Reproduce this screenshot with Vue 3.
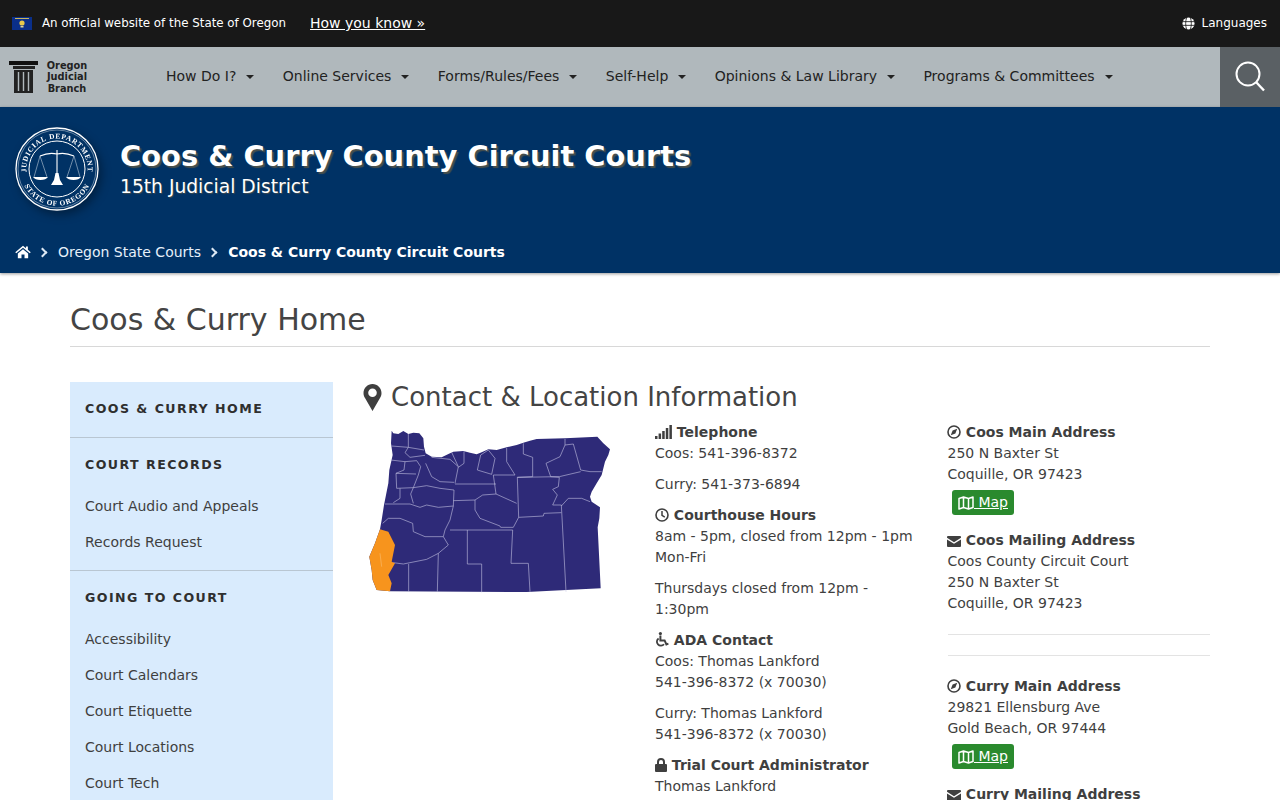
<script setup>
const navItems = ["How Do I?", "Online Services", "Forms/Rules/Fees", "Self-Help", "Opinions & Law Library", "Programs & Committees"]

const sideSections = [
  { title: "Court Records", links: ["Court Audio and Appeals", "Records Request"] },
  { title: "Going to Court", links: ["Accessibility", "Court Calendars", "Court Etiquette", "Court Locations", "Court Tech", "Interpreters"] }
]

const counties = [
  { name: "Coos", lines: ["250 N Baxter St", "Coquille, OR 97423"], mail: ["Coos County Circuit Court", "250 N Baxter St", "Coquille, OR 97423"] },
  { name: "Curry", lines: ["29821 Ellensburg Ave", "Gold Beach, OR 97444"], mail: ["Curry County Circuit Court", "29821 Ellensburg Ave", "Gold Beach, OR 97444"] }
]

// county lines, traced in the same coords as the state outline
const countyLines = [
  "M95 78 L145 82 L192 90", "M145 42 L145 82", "M145 82 L135 98 L150 112 L195 106", "M135 125 L170 122 L182 140 L175 165 L160 203",
  "M92 120 L135 125 L132 150 L108 160 L168 162", "M108 160 L110 205 L160 203", "M160 203 L152 222 L160 250", "M197 130 L215 170 L240 185 L282 187", "M215 112 L270 118 L295 140 L285 190",
  "M275 97 L295 140", "M312 94 L312 130 L295 142", "M385 90 L362 105 L352 150 L395 163 L405 115 L385 90", "M440 84 L440 125 L465 165 L400 165 L408 222 L470 250",
  "M490 70 L490 102 L518 112 L518 170 L472 172 L476 292 L550 288 L552 280 L604 278", "M615 57 L615 75 L640 72 L662 150 L690 155 L725 155", "M615 75 L600 110 L558 130 L572 170 L598 172 L595 200 L578 208 L592 225 L578 255 L604 255",
  "M472 172 L598 170 L662 155", "M285 192 L408 192", "M280 242 L345 240 L345 270 L360 295 L420 318 L422 322 L460 322 L476 292", "M345 240 L368 225 L408 222",
  "M160 203 L200 197 L240 205 L282 210 L280 258 L270 300 L255 330 L250 350 L195 350 L160 335 L158 310 L120 295 L85 295 L68 310", "M75 252 L150 252 L180 262 L200 255 L235 262 L280 258",
  "M120 205 L120 235 L100 248", "M270 330 L458 330 L453 430 L505 430 L510 515", "M322 330 L322 432 L365 432 L365 517", "M250 350 L265 375 L235 400 L232 515",
  "M235 400 L200 418 L130 432 L100 428", "M146 432 L146 515", "M604 255 L618 515", "M604 258 L625 235 L665 235 L690 245"
]
</script>

<template>
  <div class="page">
    <div class="topbar">
      <div class="official">
        <svg class="flag" viewBox="0 0 20 13" width="20" height="13">
          <rect width="20" height="13" fill="#0a2f8a" />
          <rect x="3" y="1" width="14" height="1" fill="#c9b458" />
          <circle cx="10" cy="6" r="2.6" fill="#e8c94a" />
          <rect x="8.5" y="9" width="3" height="1.5" fill="#d9d2a0" />
        </svg>
        <span>An official website of the State of Oregon</span>
        <a class="know">How you know »</a>
      </div>
      <div class="languages">
        <svg viewBox="0 0 14 14" width="13" height="13">
          <circle cx="7" cy="7" r="6.5" fill="#fff" />
          <path d="M0.5 5H13.5M0.5 9H13.5M5 0.5C3.6 4.5 3.6 9.5 5 13.5M9 0.5C10.4 4.5 10.4 9.5 9 13.5" stroke="#181818" stroke-width="0.9" fill="none" />
        </svg>
        <span>Languages</span>
      </div>
    </div>

    <nav class="mainnav">
      <div class="logo">
        <svg viewBox="0 0 30 32" width="30" height="32">
          <rect x="0" y="0" width="29" height="4" fill="#111" />
          <rect x="4" y="5" width="22" height="3" fill="#222" />
          <rect x="5" y="9" width="19" height="23" fill="#222" />
          <path d="M9.5 11V30M14.5 11V30M19.5 11V30" stroke="#b0b8bc" stroke-width="1.4" />
        </svg>
        <div class="logo-text">Oregon<br>Judicial<br>Branch</div>
      </div>
      <ul class="navlist">
        <li v-for="item in navItems" :key="item">{{ item }}<i class="caret"></i></li>
      </ul>
      <div class="searchbtn">
        <svg viewBox="0 0 32 32" width="32" height="32">
          <circle cx="14" cy="13" r="11.5" fill="none" stroke="#fff" stroke-width="2" />
          <path d="M22 21L30 29.5" stroke="#fff" stroke-width="2.4" />
        </svg>
      </div>
    </nav>

    <header class="banner">
      <div class="banner-top">
        <svg class="seal" viewBox="0 0 84 84" width="84" height="84">
          <defs>
            <path id="sealTop" d="M12.3 50A30.7 30.7 0 1 1 71.7 50" />
            <path id="sealBottom" d="M6.2 50A36.7 36.7 0 0 0 77.8 50" />
          </defs>
          <circle cx="42" cy="42" r="41" fill="#003265" stroke="#fff" stroke-width="1.3" />
          <circle cx="42" cy="42" r="39" fill="none" stroke="#fff" stroke-width="0.4" />
          <circle cx="42" cy="42" r="28" fill="none" stroke="#fff" stroke-width="1" />
          <text class="seal-text"><textPath href="#sealTop" startOffset="50%" text-anchor="middle">JUDICIAL DEPARTMENT</textPath></text>
          <text class="seal-text"><textPath href="#sealBottom" startOffset="50%" text-anchor="middle">STATE OF OREGON</textPath></text>
          <path d="M42 23V52M25 29Q34 25 42 27Q50 25 59 29" stroke="#fff" stroke-width="1.1" fill="none" />
          <path d="M25 29L19 50M25 29L32 50M59 29L52 50M59 29L65 50" stroke="#dfe6ee" stroke-width="0.5" fill="none" />
          <path d="M18 50H33Q31 53 25.5 53Q20 53 18 50ZM51 50H66Q64 53 58.5 53Q53 53 51 50Z" fill="#fff" />
          <path d="M40.5 46H43.5L45 53H39ZM36 58L39 53H45L48 58Z" fill="#fff" />
        </svg>
        <div class="banner-titles">
          <h1>Coos &amp; Curry County Circuit Courts</h1>
          <div class="district">15th Judicial District</div>
        </div>
      </div>
      <div class="crumbs">
        <svg viewBox="0 0 18 15" width="16" height="14">
          <path d="M9 0.5L0.3 7.8L1.4 9L9 2.7L16.6 9L17.7 7.8L14.5 5.1V1.2H12.3V3.3ZM3.2 9.2V14.5H7.3V10.3H10.7V14.5H14.8V9.2L9 4.4Z" fill="#fff" />
        </svg>
        <i class="chev"></i>
        <span>Oregon State Courts</span>
        <i class="chev"></i>
        <strong>Coos &amp; Curry County Circuit Courts</strong>
      </div>
    </header>

    <main class="content">
      <h1 class="page-title">Coos &amp; Curry Home</h1>
      <div class="layout">
        <aside class="sidebar">
          <div class="side-home">Coos &amp; Curry Home</div>
          <section v-for="sec in sideSections" :key="sec.title" class="side-section">
            <h4>{{ sec.title }}</h4>
            <a v-for="link in sec.links" :key="link">{{ link }}</a>
          </section>
        </aside>

        <div class="main-col">
          <h2 class="contact-title">
            <svg viewBox="0 0 18 27" width="19" height="27">
              <path fill-rule="evenodd" d="M9 0C4 0 0 4 0 9C0 11 .6 12.6 1.5 14L9 27L16.5 14C17.4 12.6 18 11 18 9C18 4 14 0 9 0ZM9 13A4.3 4.3 0 1 1 9 4.4A4.3 4.3 0 0 1 9 13Z" fill="#3f3f3f" />
            </svg>
            Contact &amp; Location Information
          </h2>
          <div class="info-grid">
            <div class="map-col">
              <svg viewBox="0 0 780 540" width="260" height="180">
                <path fill="#2e2a78" d="M95 32L100 40L115 42L130 33L145 42L160 38L178 40L190 55L192 80L197 100L215 110L245 112L270 100L280 95L310 93L330 98L350 103L365 97L385 88L410 90L440 82L470 75L490 68L510 62L530 57L615 55L712 50L730 70L750 88L745 105L735 125L725 165L710 190L695 215L690 230L695 245L720 262L718 295L713 322L722 505L500 516L90 514L50 510L38 480L35 450L28 410L45 370L60 328L65 300L72 255L78 225L85 190L88 150L98 105L93 70Z" />
                <path v-for="(d, i) in countyLines" :key="i" :d="d" fill="none" stroke="#c4c2e2" stroke-width="1.8" />
                <path fill="#f7941d" d="M60 328L85 335L105 375L95 425L105 430L85 465L95 490L90 514L50 510L38 480L35 450L28 410L45 370Z" />
                <path d="M60 400L65 440" stroke="#fbc57f" stroke-width="1.5" fill="none" />
              </svg>
            </div>

            <div class="info-col">
              <h5>
                <svg viewBox="0 0 17 14" width="17" height="14" class="ico">
                  <path d="M0 11H2.5V14H0ZM3.6 8.5H6.1V14H3.6ZM7.2 6H9.7V14H7.2ZM10.8 3H13.3V14H10.8ZM14.4 0H16.9V14H14.4Z" fill="#3f3f3f" />
                </svg>
                Telephone
              </h5>
              <p>Coos: 541-396-8372</p>
              <p>Curry: 541-373-6894</p>
              <h5>
                <svg viewBox="0 0 14 14" width="14" height="14" class="ico">
                  <circle cx="7" cy="7" r="6" fill="none" stroke="#3f3f3f" stroke-width="1.6" />
                  <path d="M7 3V7.4L9.8 9.2" fill="none" stroke="#3f3f3f" stroke-width="1.5" />
                </svg>
                Courthouse Hours
              </h5>
              <p>8am - 5pm, closed from 12pm - 1pm Mon-Fri</p>
              <p>Thursdays closed from 12pm - 1:30pm</p>
              <h5>
                <svg viewBox="0 0 14 15" width="14" height="15" class="ico">
                  <circle cx="5.4" cy="1.6" r="1.6" fill="#3f3f3f" />
                  <path d="M5.4 3.5V8.4H9.6L11.4 12.4L13.4 11.6" fill="none" stroke="#3f3f3f" stroke-width="2" />
                  <path d="M3.6 6.4A4 4 0 1 0 9 12.2" fill="none" stroke="#3f3f3f" stroke-width="1.8" />
                </svg>
                ADA Contact
              </h5>
              <p>Coos: Thomas Lankford<br>541-396-8372 (x 70030)</p>
              <p>Curry: Thomas Lankford<br>541-396-8372 (x 70030)</p>
              <h5>
                <svg viewBox="0 0 12 14" width="12" height="14" class="ico">
                  <path fill-rule="evenodd" d="M2 6V4A4 4 0 0 1 10 4V6H11A1 1 0 0 1 12 7V13A1 1 0 0 1 11 14H1A1 1 0 0 1 0 13V7A1 1 0 0 1 1 6ZM4 6H8V4A2 2 0 0 0 4 4Z" fill="#3f3f3f" />
                </svg>
                Trial Court Administrator
              </h5>
              <p>Thomas Lankford</p>
            </div>

            <div class="addr-col">
              <template v-for="county in counties" :key="county.name">
                <div class="addr-block">
                  <h5>
                    <svg viewBox="0 0 14 14" width="14" height="14" class="ico">
                      <circle cx="7" cy="7" r="6" fill="none" stroke="#3f3f3f" stroke-width="1.6" />
                      <path d="M10.2 3.8L8.4 8.4L3.8 10.2L5.6 5.6Z" fill="#3f3f3f" />
                    </svg>
                    {{ county.name }} Main Address
                  </h5>
                  <div>{{ county.lines[0] }}</div>
                  <div>{{ county.lines[1] }}</div>
                  <a class="mapbtn">
                    <svg viewBox="0 0 16 14" width="16" height="14">
                      <path d="M1 2.5L5.5 1V11.5L1 13ZM5.5 1L10.5 2.5V13L5.5 11.5ZM10.5 2.5L15 1V11.5L10.5 13Z" fill="none" stroke="#fff" stroke-width="1.5" stroke-linejoin="round" />
                    </svg>
                    <span> Map</span>
                  </a>
                  <h5>
                    <svg viewBox="0 0 14 11" width="14" height="11" class="ico">
                      <path d="M1 0H13A1 1 0 0 1 14 1V1.8L7 6.2L0 1.8V1A1 1 0 0 1 1 0ZM0 3.4L7 7.8L14 3.4V10A1 1 0 0 1 13 11H1A1 1 0 0 1 0 10Z" fill="#3f3f3f" />
                    </svg>
                    {{ county.name }} Mailing Address
                  </h5>
                  <div v-for="line in county.mail" :key="line">{{ line }}</div>
                </div>
                <template v-if="county.name === 'Coos'">
                  <hr>
                  <hr class="second">
                </template>
              </template>
            </div>
          </div>
        </div>
      </div>
    </main>
  </div>
</template>

<style>
html, body {
  margin: 0;
  background: #fff;
}
</style>

<style scoped>
.page {
  font-family: "DejaVu Sans", sans-serif;
  font-size: 14px;
  line-height: 21px;
  color: #3f3f3f;
}

.topbar {
  height: 47px;
  background: #181818;
  color: #fff;
  display: flex;
  align-items: center;
  justify-content: space-between;
  padding: 0 13px 0 12px;
  font-size: 11.85px;
}
.official {
  display: flex;
  align-items: center;
}
.flag {
  margin-right: 10px;
}
.know {
  margin-left: 24px;
  font-size: 14px;
  text-decoration: underline;
}
.languages {
  display: flex;
  align-items: center;
  gap: 7px;
  font-size: 12px;
}

.mainnav {
  height: 60px;
  background: #b0b8bc;
  display: flex;
  align-items: center;
}
.logo {
  width: 166px;
  padding-left: 9px;
  box-sizing: border-box;
  display: flex;
  align-items: center;
  gap: 6px;
}
.logo-text {
  width: 44px;
  text-align: center;
  font-size: 9.8px;
  line-height: 11.5px;
  font-weight: bold;
  color: #222;
}
.navlist {
  list-style: none;
  margin: 0 0 2px;
  padding: 0;
  display: flex;
  flex: 1;
  gap: 28.4px;
  color: #222;
}
.caret {
  display: inline-block;
  margin-left: 10px;
  vertical-align: 2px;
  border-top: 4.5px solid #222;
  border-left: 4.5px solid transparent;
  border-right: 4.5px solid transparent;
}
.searchbtn {
  width: 60px;
  height: 60px;
  background: #5a6064;
  display: flex;
  align-items: center;
  justify-content: center;
}

.banner {
  height: 166px;
  background: #003265;
  color: #fff;
  box-shadow: 0 1px 3px rgba(0, 0, 0, 0.4);
}
.banner-top {
  display: flex;
  align-items: flex-start;
  padding: 20px 0 0 15px;
  gap: 21px;
  height: 133px;
  box-sizing: border-box;
}
.seal {
  filter: drop-shadow(3px 4px 5px rgba(0, 0, 0, 0.35));
}
.seal-text {
  font-family: "Liberation Serif", serif;
  font-size: 7.4px;
  font-weight: bold;
  fill: #fff;
  letter-spacing: 0.7px;
}
.banner-titles {
  padding-top: 9px;
}
.banner h1 {
  margin: 0;
  font-size: 28.9px;
  line-height: 40px;
  font-weight: bold;
  text-shadow: 2px 2px 1px rgba(120, 100, 60, 0.6);
}
.district {
  font-size: 18.7px;
  line-height: 21px;
  text-shadow: 1px 1px 1px rgba(120, 100, 60, 0.5);
}
.crumbs {
  display: flex;
  align-items: center;
  padding-left: 15px;
  height: 24px;
  color: #e6f0fa;
}
.crumbs strong {
  color: #fff;
}
.chev {
  width: 5px;
  height: 5px;
  border-top: 2px solid #dce8f4;
  border-right: 2px solid #dce8f4;
  transform: rotate(45deg);
  margin: 0 12px 0 8px;
}

.content {
  padding: 25px 70px 40px;
}
.page-title {
  margin: 0 0 35px;
  font-size: 30px;
  line-height: 44px;
  font-weight: normal;
  padding-bottom: 4px;
  border-bottom: 1px solid #d8d8d8;
  color: #444;
}
.layout {
  display: grid;
  grid-template-columns: 263px 1fr;
  gap: 30px;
}
.sidebar {
  background: #d9ebfd;
}
.side-home,
.side-section h4 {
  margin: 0;
  font-size: 12.6px;
  font-weight: bold;
  text-transform: uppercase;
  letter-spacing: 1.45px;
  color: #2f2f2f;
}
.side-home {
  padding: 16px 15px 18px;
}
.side-section {
  border-top: 1px solid #b9c6d2;
  padding: 16px 15px 2px;
}
.side-section h4 {
  margin-bottom: 21px;
}
.side-section a {
  display: block;
  height: 36px;
}

.contact-title {
  margin: 0 0 10px;
  font-size: 26px;
  line-height: 30px;
  font-weight: normal;
  display: flex;
  align-items: center;
  gap: 9px;
  color: #444;
}
.info-grid {
  display: grid;
  grid-template-columns: 262px 262.5px 262.5px;
  gap: 30px;
}
.map-col svg {
  display: block;
  margin: -2px 0 0 -3px;
}
.info-col h5,
.addr-col h5 {
  margin: 0;
  font-size: 14px;
  line-height: 21px;
  font-weight: bold;
}
.addr-col h5 {
  margin-left: -0.5px;
}
.ico {
  vertical-align: -2px;
}
.info-col p {
  margin: 0 0 10px;
}
.mapbtn {
  display: inline-flex;
  align-items: center;
  height: 25px;
  margin: 5px 0 15px 4.5px;
  padding: 0 6px;
  background: #2a8a2e;
  color: #fff;
  border-radius: 3px;
  text-decoration: underline;
}
.mapbtn span {
  white-space: pre;
}
.addr-col hr {
  margin: 20px 0;
  border: 0;
  border-top: 1px solid #e3e3e3;
}
.addr-col hr.second {
  margin: 0 0 20px;
}
</style>
